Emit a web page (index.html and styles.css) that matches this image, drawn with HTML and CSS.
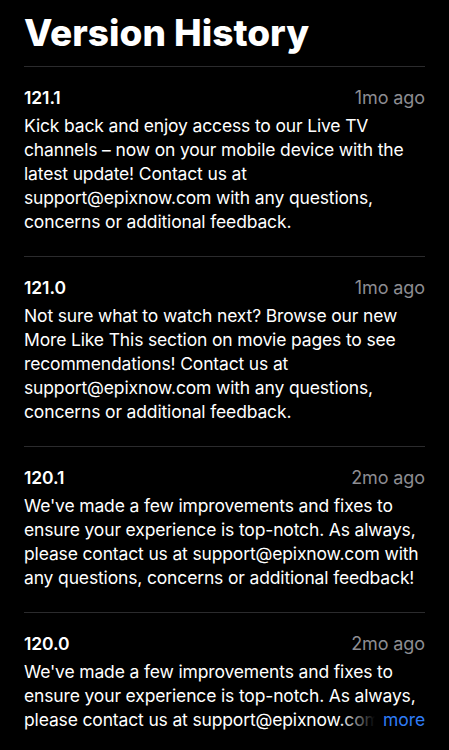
FILE: index.html
```html
<!DOCTYPE html>
<html>
<head>
<meta charset="utf-8">
<link rel="stylesheet" href="styles.css">
</head>
<body>
<main class="page">
  <h1 class="title">Version History</h1>
  <section class="entry">
    <div class="entry-head"><span class="ver">121.1</span><span class="date">1mo ago</span></div>
    <p class="notes">Kick back and enjoy access to our Live TV channels – now on your mobile device with the latest update! Contact us at support@epixnow.com with any questions, concerns or additional feedback.</p>
  </section>
  <section class="entry">
    <div class="entry-head"><span class="ver">121.0</span><span class="date">1mo ago</span></div>
    <p class="notes">Not sure what to watch next? Browse our new More Like This section on movie pages to see recommendations! Contact us at support@epixnow.com with any questions, concerns or additional feedback.</p>
  </section>
  <section class="entry">
    <div class="entry-head"><span class="ver">120.1</span><span class="date">2mo ago</span></div>
    <p class="notes">We've made a few improvements and fixes to ensure your experience is top-notch. As always, please contact us at support@epixnow.com with any questions, concerns or additional feedback!</p>
  </section>
  <section class="entry">
    <div class="entry-head"><span class="ver">120.0</span><span class="date">2mo ago</span></div>
    <div class="clamp-wrap">
      <p class="notes clamp">We've made a few improvements and fixes to ensure your experience is top-notch. As always, please contact us at support@epixnow.com with any questions, concerns or additional feedback!</p>
      <span class="more">more</span>
    </div>
  </section>
</main>
</body>
</html>
```
FILE: styles.css
```css
* { box-sizing: border-box; }
html, body { margin: 0; padding: 0; background: #000; }
body {
  font-family: Inter, "Noto Sans", sans-serif;
  color: #fff;
  -webkit-font-smoothing: antialiased;
}
.page {
  padding: 0 24px;
}
.title {
  margin: 0;
  padding-top: 10px;
  height: 66px;
  font-size: 37px;
  line-height: 46px;
  font-weight: 800;
  letter-spacing: 0;
}
.entry {
  border-top: 1px solid #2b2b2d;
  padding: 20px 0 22px;
}
.entry-head {
  display: flex;
  justify-content: space-between;
  align-items: baseline;
  height: 22px;
  line-height: 22px;
  margin-bottom: 5px;
}
.ver {
  font-size: 17.5px;
  font-weight: 600;
  letter-spacing: -0.1px;
}
.date {
  font-size: 18px;
  color: #8d8d92;
  letter-spacing: -0.1px;
}
.notes {
  margin: 0;
  font-size: 17.5px;
  line-height: 24px;
  letter-spacing: -0.15px;
}
.clamp-wrap {
  position: relative;
}
.clamp {
  display: -webkit-box;
  -webkit-box-orient: vertical;
  -webkit-line-clamp: 3;
  overflow: hidden;
}
.more {
  position: absolute;
  right: 0;
  bottom: 0;
  line-height: 24px;
  font-size: 17.5px;
  color: #2f7cf6;
  padding-left: 44px;
  background: linear-gradient(to right, rgba(0,0,0,0) 0, #000 36px);
  letter-spacing: -0.1px;
}
```
